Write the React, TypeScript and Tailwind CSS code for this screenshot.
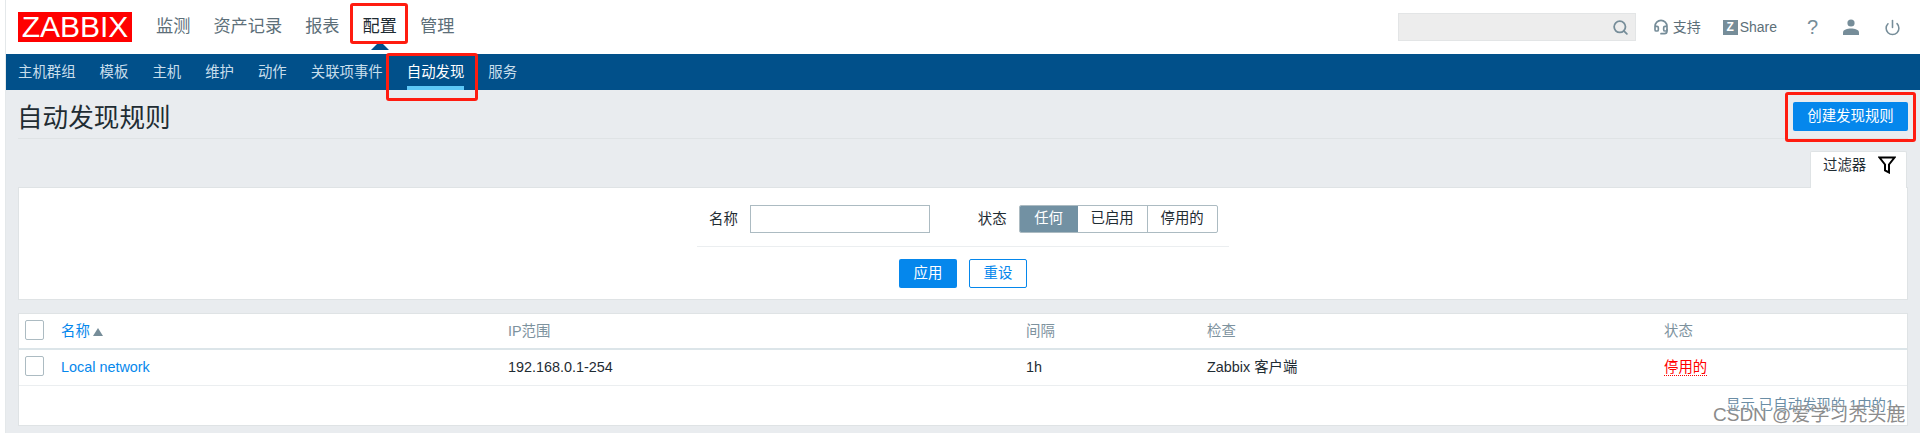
import React from 'react';
import { Search, Headset, Power } from 'lucide-react';

const mainMenu = ['监测', '资产记录', '报表', '配置', '管理'];
const subMenu = ['主机群组', '模板', '主机', '维护', '动作', '关联项事件', '自动发现', '服务'];
const statusOptions = ['任何', '已启用', '停用的'];

const tableCols = 'grid grid-cols-[42px_447px_518px_181px_457px_1fr] items-center';

const Checkbox: React.FC = () => (
  <span className="mb-[4px] ml-[6px] block h-[20px] w-[19px] rounded-[2px] border border-[#acbbc2] bg-white" />
);

const App: React.FC = () => {
  return (
    <div className="relative h-[433px] w-[1920px] overflow-hidden bg-white pl-[5px] font-['Liberation_Sans','Noto_Sans_CJK_SC',sans-serif] text-[14.4px] text-[#1f2c33]">
      <div className="h-full border-l border-[#e4e8ea]">
        {/* Top bar */}
        <header className="flex h-[54px] items-center">
          <div className="ml-[12px] flex h-[30px] w-[114px] items-center justify-center bg-[#ff0000] text-[30px] leading-none text-white">
            ZABBIX
          </div>
          <nav className="ml-[24px] flex gap-[23px] text-[17.2px] text-[#5d6f79]">
            {mainMenu.map((item) => (
              <a key={item} className={item === '配置' ? 'relative text-[#1f2c33]' : ''}>
                {item}
                {item === '配置' && (
                  <span className="absolute left-1/2 top-[27px] h-0 w-0 -translate-x-1/2 border-x-[9px] border-b-[9px] border-x-transparent border-b-[#01508a]" />
                )}
              </a>
            ))}
          </nav>
          <div className="ml-auto flex items-center text-[14px]">
            <div className="flex h-[28px] w-[238px] items-center justify-end border border-[#e3e5e6] bg-[#ededed] pr-[6px]">
              <Search className="h-[17px] w-[17px] text-[#768d99]" strokeWidth={2.5} />
            </div>
            <a className="ml-[17px] flex items-center gap-[4px] text-[#5d6f79]">
              <Headset className="h-[16px] w-[16px] text-[#768d99]" strokeWidth={2.5} />
              支持
            </a>
            <a className="ml-[22px] flex items-center gap-[2px] text-[#5d6f79]">
              <span className="flex h-[15px] w-[15px] items-center justify-center bg-[#768d99] text-[12px] font-bold leading-none text-white">
                Z
              </span>
              Share
            </a>
            <span className="ml-[30px] w-[10px] text-center text-[20px] leading-none text-[#768d99]">?</span>
            <svg className="ml-[26px] h-[16px] w-[16px] text-[#768d99]" viewBox="0 0 16 16" fill="currentColor">
              <circle cx="8" cy="4" r="3.6" />
              <path d="M0 16v-2.5C0 10.5 4.5 9.5 8 9.5s8 1 8 4V16z" />
            </svg>
            <Power className="ml-[25px] mr-[19px] h-[17px] w-[17px] text-[#768d99]" strokeWidth={2.2} />
          </div>
        </header>

        {/* Section menu */}
        <nav className="flex h-[36px] gap-[24px] bg-[#01508a] pl-[12px]">
          {subMenu.map((item) => (
            <a
              key={item}
              className={
                item === '自动发现'
                  ? 'flex items-center border-b-[4px] border-[#5ec8f7] pt-[5px] text-white'
                  : 'flex items-center pt-[1px] text-[#c8deec]'
              }
            >
              {item}
            </a>
          ))}
        </nav>

        {/* Page body */}
        <main className="h-[343px] bg-[#e9ecef] px-[12px]">
          <div className="flex h-[49px] items-start justify-between border-b border-[#dfe3e5]">
            <h1 className="-ml-px pt-[10px] text-[25.6px] leading-[36px] font-normal text-[#1f2c33]">自动发现规则</h1>
            <button className="mt-[12px] h-[29px] w-[115px] rounded-[2px] bg-[#0587ec] text-white">创建发现规则</button>
          </div>

          {/* Filter tab */}
          <div className="mt-[12px] flex justify-end pr-[1px]">
            <div className="relative z-10 -mb-px flex h-[37px] w-[97px] items-start rounded-t-[2px] border-x border-t border-[#dfe3e5] border-b-0 bg-white pl-[12px] pt-[4px]">
              <span className="leading-[18px]">过滤器</span>
              <svg className="ml-[12px] h-[18px] w-[18px] text-black" viewBox="0 0 18 18" fill="none" stroke="currentColor" strokeWidth="2">
                <path d="M1.5 1.5H16.5L11 8.5V16.5L7 14.5V8.5Z" />
              </svg>
            </div>
          </div>

          {/* Filter form */}
          <section className="h-[113px] border border-[#dfe3e5] bg-white pt-[17px]">
            <div className="mx-auto w-[532px]">
              <div className="flex h-[42px] items-start border-b border-[#ebeef0] pl-[12px]">
                <label className="leading-[28px]">名称</label>
                <input className="ml-[12px] h-[28px] w-[180px] border border-[#acbbc2] bg-white" />
                <label className="ml-[48px] leading-[28px]">状态</label>
                <div className="ml-[12px] flex h-[28px] w-[199px] overflow-hidden rounded-[2px] border border-[#acbbc2]">
                  {statusOptions.map((opt, i) => (
                    <span
                      key={opt}
                      className={
                        i === 0
                          ? 'flex w-[58px] items-center justify-center bg-[#7291a3] text-white'
                          : i === 1
                            ? 'flex w-[70px] items-center justify-center border-r border-[#acbbc2]'
                            : 'flex flex-1 items-center justify-center'
                      }
                    >
                      {opt}
                    </span>
                  ))}
                </div>
              </div>
              <div className="mt-[12px] flex justify-center gap-[12px]">
                <button className="h-[29px] w-[58px] rounded-[2px] bg-[#0587ec] text-white">应用</button>
                <button className="h-[29px] w-[58px] rounded-[2px] border border-[#0587ec] bg-white text-[#0587ec]">重设</button>
              </div>
            </div>
          </section>

          {/* Discovery rules */}
          <section className="mt-[13px] h-[113px] border border-[#dfe3e5] bg-white">
            <div className={`${tableCols} h-[34px] pt-[2px] text-[#7d929e]`}>
              <Checkbox />
              <span className="flex items-center gap-[3px] text-[#0587ec]">
                名称
                <span className="h-0 w-0 border-x-[5px] border-b-[8px] border-x-transparent border-b-[#768d99]" />
              </span>
              <span>IP范围</span>
              <span>间隔</span>
              <span>检查</span>
              <span>状态</span>
            </div>
            <div className={`${tableCols} h-[38px] border-b border-t-[2px] border-b-[#ebeef0] border-t-[#dce5e9]`}>
              <Checkbox />
              <a className="text-[#0587ec]">Local network</a>
              <span>192.168.0.1-254</span>
              <span>1h</span>
              <span>Zabbix 客户端</span>
              <span>
                <span className="border-b border-dotted border-[#ff0000] text-[#ff0000]">停用的</span>
              </span>
            </div>
            <div className="pr-[13px] pt-[10px] text-right leading-[18px] text-[#6a8da5]">显示 已自动发现的 1中的1</div>
          </section>
        </main>
      </div>

      {/* Annotation boxes around the steps */}
      <div className="absolute left-[350px] top-[3px] h-[41px] w-[58px] rounded-[3px] border-[3px] border-[#ff1c10]" />
      <div className="absolute left-[386px] top-[53px] h-[48px] w-[92px] rounded-[3px] border-[3px] border-[#ff1c10]" />
      <div className="absolute left-[1785px] top-[92px] h-[50px] w-[131px] rounded-[3px] border-[3px] border-[#ff1c10]" />

      {/* Blog watermark */}
      <div className="absolute left-[1713px] top-[403px] whitespace-nowrap text-[19px] leading-[24px] text-[#8c8c8c] [text-shadow:0_0_2px_#ffffff]">
        CSDN @爱学习秃头鹿
      </div>
    </div>
  );
};

export default App;
